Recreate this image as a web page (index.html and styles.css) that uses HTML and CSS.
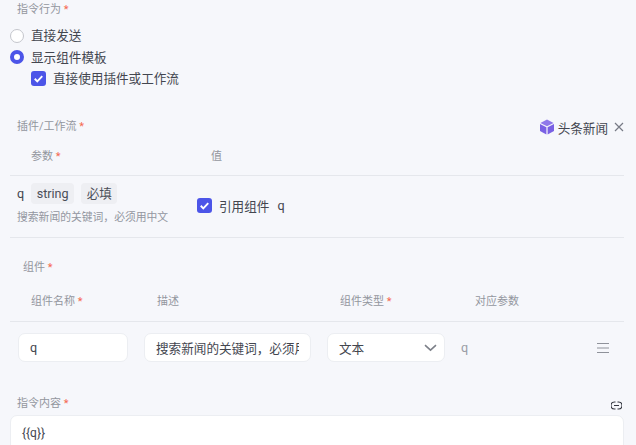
FILE: index.html
```html
<!DOCTYPE html>
<html lang="zh">
<head>
    <meta charset="UTF-8">
    <meta name="viewport" content="width=device-width, initial-scale=1.0">
    <title>指令行为</title>
    <link rel="stylesheet" href="styles.css">
</head>
<body>

<div class="page">
    <div class="field-label behavior-label">指令行为 <span class="req">*</span></div>
    <div class="radio-group">
        <div class="radio-row"><span class="radio"></span><span class="option-text">直接发送</span></div>
        <div class="radio-row"><span class="radio on"></span><span class="option-text">显示组件模板</span></div>
        <div class="check-row nested">
            <span class="check"><svg viewBox="0 0 16 16" width="15" height="15"><path d="M4 8.3l2.7 2.7L12 5.4" fill="none" stroke="#fff" stroke-width="2"/></svg></span>
            <span class="option-text">直接使用插件或工作流</span>
        </div>
    </div>

    <div class="plugin-head">
        <div class="field-label">插件/工作流 <span class="req">*</span></div>
        <div class="plugin-tag">
            <svg class="cube" viewBox="0 0 16 16" width="16" height="16">
                <path d="M8 .6l6.6 3.3L8 7.3 1.4 3.9z" fill="#8f78ea"/>
                <path d="M1 4.9l6.4 3.3v7.2L1 12.1z" fill="#7a61e4"/>
                <path d="M15 4.9L8.6 8.2v7.2l6.4-3.3z" fill="#7a61e4"/>
            </svg>
            <span>头条新闻</span>
            <svg class="close" viewBox="0 0 10 10" width="10" height="10"><path d="M1 1l8 8M9 1L1 9" stroke="#777b85" stroke-width="1.2"/></svg>
        </div>
    </div>

    <div class="table-head params-head">
        <div class="col-param">参数 <span class="req">*</span></div>
        <div>值</div>
    </div>
    <div class="params-row">
        <div class="param-info">
            <div class="param-name">q <span class="tag">string</span><span class="tag">必填</span></div>
            <div class="param-desc">搜索新闻的关键词，必须用中文</div>
        </div>
        <div class="check-row ref-check">
            <span class="check"><svg viewBox="0 0 16 16" width="15" height="15"><path d="M4 8.3l2.7 2.7L12 5.4" fill="none" stroke="#fff" stroke-width="2"/></svg></span>
            引用组件<span class="ref">q</span>
        </div>
    </div>

    <div class="field-label widgets-label">组件 <span class="req">*</span></div>
    <div class="table-head widgets-head">
        <div class="col-name">组件名称 <span class="req">*</span></div>
        <div class="col-desc">描述</div>
        <div class="col-type">组件类型 <span class="req">*</span></div>
        <div>对应参数</div>
    </div>
    <div class="widgets-row">
        <div class="input name-input">q</div>
        <div class="input desc-input"><span>搜索新闻的关键词，必须用中文</span></div>
        <div class="input type-input">文本
            <svg viewBox="0 0 13 8" width="13" height="8"><path d="M1 1.2l5.5 5 5.5-5" fill="none" stroke="#7d8089" stroke-width="1.6"/></svg>
        </div>
        <div class="bound-param">q</div>
        <svg class="drag" viewBox="0 0 12 10" width="12" height="10"><path d="M0 .5h12M0 5h12M0 9.5h12" stroke="#8f929a" stroke-width="1"/></svg>
    </div>

    <div class="content-head">
        <div class="field-label">指令内容 <span class="req">*</span></div>
        <svg class="link" viewBox="0 0 11 9" width="11" height="9"><path d="M4.5 1H3.5a3.5 3.5 0 0 0 0 7h1M6.5 1h1a3.5 3.5 0 0 1 0 7h-1M3 4.5h5" fill="none" stroke="#33363f" stroke-width="1.1"/></svg>
    </div>
    <div class="textarea">{{q}}</div>
</div>

</body>
</html>
```

FILE: styles.css
```css
html, body {
    margin: 0;
    height: 100%;
    overflow: hidden;
}
body {
    font-family: Roboto, "Noto Sans CJK SC", sans-serif;
    font-size: 12.6px;
    color: #43464f;
    background-color: #f6f7fb;
}
.page {
    width: 614px;
    margin-left: 10px;
}
.req {
    color: #f5694f;
}
.field-label {
    font-size: 11px;
    line-height: 16px;
    color: #93969e;
    padding-left: 7px;
    padding-top: 2px;
    margin-bottom: -2px;
}
.radio-group {
    padding-top: 9px;
}
.radio-row {
    display: flex;
    align-items: center;
    gap: 7px;
    height: 21.5px;
}
.option-text {
    margin-top: -2px;
}
.radio {
    width: 12px;
    height: 12px;
    border: 1px solid #c4c6cc;
    border-radius: 50%;
    background: #fff;
}
.radio.on {
    width: 6px;
    height: 6px;
    border: 4px solid #4c55e8;
}
.check-row {
    display: flex;
    align-items: center;
    gap: 7px;
    height: 22px;
}
.nested {
    height: 21.5px;
    padding-left: 21px;
}
.check {
    display: flex;
    width: 15px;
    height: 15px;
    border-radius: 3px;
    background: #4c55e8;
}
.plugin-head {
    display: flex;
    justify-content: space-between;
    align-items: center;
    height: 20px;
    margin-top: 25.5px;
}
.plugin-tag {
    display: flex;
    align-items: center;
    gap: 3px;
    position: relative;
    top: 2px;
}
.plugin-tag .close {
    margin-left: 3px;
}
.table-head {
    display: flex;
    align-items: center;
    font-size: 11px;
    color: #93969e;
    border-bottom: 1px solid #e5e7ec;
    padding-left: 21px;
}
.params-head {
    height: 40px;
}
.col-param {
    width: 180px;
}
.params-row {
    display: flex;
    align-items: flex-start;
    box-sizing: border-box;
    height: 62px;
    padding-top: 6px;
    border-bottom: 1px solid #e5e7ec;
}
.param-info {
    width: 187px;
    padding-left: 7px;
    box-sizing: border-box;
}
.param-name {
    display: flex;
    align-items: center;
    gap: 7px;
    height: 22px;
}
.tag {
    padding: 0 5.5px;
    line-height: 21px;
    border-radius: 4px;
    background: #eeeff3;
    color: #4b4e58;
}
.param-desc {
    font-size: 10.8px;
    line-height: 16px;
    color: #9396a0;
    margin-top: 6px;
    white-space: nowrap;
}
.ref-check {
    margin-top: 12px;
}
.ref {
    padding-left: 1px;
}
.widgets-label {
    padding-left: 13px;
    margin-top: 20px;
}
.widgets-head {
    align-items: flex-end;
    height: 36px;
    padding-bottom: 11px;
    line-height: 16px;
}
.col-name {
    width: 126px;
}
.col-desc {
    width: 183px;
}
.col-type {
    width: 135px;
}
.widgets-row {
    display: flex;
    align-items: center;
    height: 51px;
    padding-left: 8px;
}
.input {
    display: flex;
    align-items: center;
    box-sizing: border-box;
    height: 29px;
    border: 1px solid #eceef2;
    border-radius: 7px;
    background: #fff;
    padding: 0 11px;
    overflow: hidden;
    white-space: nowrap;
}
.name-input {
    width: 110px;
    margin-right: 16px;
}
.desc-input {
    width: 167px;
    margin-right: 16px;
}
.desc-input span {
    display: block;
    width: 143px;
    overflow: hidden;
}
.type-input {
    width: 118px;
    justify-content: space-between;
    padding-right: 7px;
}
.bound-param {
    width: 136px;
    margin-left: 16px;
    color: #9a9da6;
}
.content-head {
    display: flex;
    justify-content: space-between;
    align-items: center;
    height: 18px;
    margin-top: 20px;
}
.link {
    margin-right: 2px;
    position: relative;
    top: 3px;
}
.textarea {
    box-sizing: border-box;
    height: 60px;
    margin-top: 4px;
    padding: 7px 11px;
    border: 1px solid #eceef2;
    border-radius: 7px;
    background: #fff;
    font-size: 12px;
    line-height: 20px;
}
```
